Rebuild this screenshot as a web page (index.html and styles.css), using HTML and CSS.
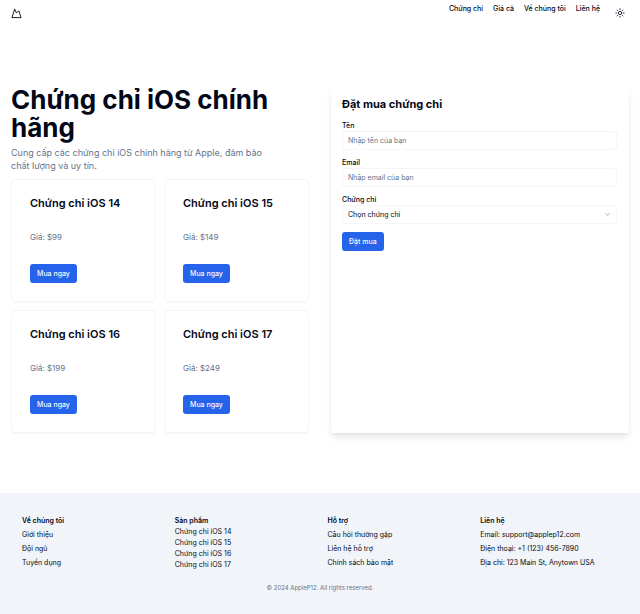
FILE: index.html
```html
<!DOCTYPE html>
<html lang="vi">
<head>
<meta charset="utf-8">
<meta name="viewport" content="width=device-width, initial-scale=1">
<title>AppleP12</title>
<link rel="stylesheet" href="styles.css">
</head>
<body>
<header class="site-header">
  <a class="logo" href="#" aria-label="AppleP12">
    <svg viewBox="0 0 24 24" aria-hidden="true"><path d="m8 3 4 8 5-5 5 15H2L8 3z"/></svg>
  </a>
  <nav class="nav">
    <a href="#">Chứng chỉ</a>
    <a href="#">Giá cả</a>
    <a href="#">Về chúng tôi</a>
    <a href="#">Liên hệ</a>
  </nav>
  <button class="theme" type="button" aria-label="Giao diện">
    <svg viewBox="0 0 24 24" aria-hidden="true"><circle cx="12" cy="12" r="4"/><path d="M12 2v2M12 20v2M4.9 4.9l1.4 1.4M17.7 17.7l1.4 1.4M2 12h2M20 12h2M6.3 17.7l-1.4 1.4M19.1 4.9l-1.4 1.4"/></svg>
  </button>
</header>
<main class="hero">
  <section class="intro">
    <h1>Chứng chỉ iOS chính hãng</h1>
    <p class="lead">Cung cấp các chứng chỉ iOS chính hãng từ Apple, đảm bảo chất lượng và uy tín.</p>
    <div class="products">
      <article class="card"><h2>Chứng chỉ iOS 14</h2><p>Giá: $99</p><button class="btn" type="button">Mua ngay</button></article>
      <article class="card"><h2>Chứng chỉ iOS 15</h2><p>Giá: $149</p><button class="btn" type="button">Mua ngay</button></article>
      <article class="card"><h2>Chứng chỉ iOS 16</h2><p>Giá: $199</p><button class="btn" type="button">Mua ngay</button></article>
      <article class="card"><h2>Chứng chỉ iOS 17</h2><p>Giá: $249</p><button class="btn" type="button">Mua ngay</button></article>
    </div>
  </section>
  <form class="order">
    <h2>Đặt mua chứng chỉ</h2>
    <div class="field">
      <label for="name">Tên</label>
      <input id="name" type="text" placeholder="Nhập tên của bạn">
    </div>
    <div class="field">
      <label for="email">Email</label>
      <input id="email" type="email" placeholder="Nhập email của bạn">
    </div>
    <div class="field">
      <label for="cert">Chứng chỉ</label>
      <div class="select">
        <select id="cert"><option>Chọn chứng chỉ</option><option>iOS 14</option><option>iOS 15</option><option>iOS 16</option><option>iOS 17</option></select>
        <svg viewBox="0 0 24 24" aria-hidden="true"><path d="m6 9 6 6 6-6"/></svg>
      </div>
    </div>
    <button class="btn" type="button">Đặt mua</button>
  </form>
</main>
<footer class="footer">
  <div class="columns">
    <div class="column">
      <h3>Về chúng tôi</h3>
      <a href="#">Giới thiệu</a>
      <a href="#">Đội ngũ</a>
      <a href="#">Tuyển dụng</a>
    </div>
    <div class="column compact">
      <h3>Sản phẩm</h3>
      <a href="#">Chứng chỉ iOS 14</a>
      <a href="#">Chứng chỉ iOS 15</a>
      <a href="#">Chứng chỉ iOS 16</a>
      <a href="#">Chứng chỉ iOS 17</a>
    </div>
    <div class="column">
      <h3>Hỗ trợ</h3>
      <a href="#">Câu hỏi thường gặp</a>
      <a href="#">Liên hệ hỗ trợ</a>
      <a href="#">Chính sách bảo mật</a>
    </div>
    <div class="column">
      <h3>Liên hệ</h3>
      <p>Email: support@applep12.com</p>
      <p>Điện thoại: +1 (123) 456-7890</p>
      <p>Địa chỉ: 123 Main St, Anytown USA</p>
    </div>
  </div>
  <p class="copyright">© 2024 AppleP12. All rights reserved.</p>
</footer>
</body>
</html>
```
FILE: styles.css
```css
* { box-sizing: border-box; margin: 0; }
body {
  min-height: 100vh;
  display: flex;
  flex-direction: column;
  font: 7px/10px Inter, "Liberation Sans", sans-serif;
  color: #020817;
  background: #fff;
}
a { color: inherit; text-decoration: none; }
button, input, select { font: inherit; color: inherit; }
svg { display: block; fill: none; stroke: currentColor; stroke-width: 2; stroke-linecap: round; stroke-linejoin: round; }

.site-header { display: flex; align-items: center; height: 26px; padding: 0 11px; }
.logo svg { width: 11px; height: 11px; }
.nav { display: flex; gap: 10px; margin-left: auto; align-self: flex-start; padding-top: 4px; font-weight: 500; }
.theme { margin-left: 11px; padding: 4px; border: 0; background: none; }
.theme svg { width: 10px; height: 10px; }

.hero { display: grid; grid-template-columns: 1fr 1fr; gap: 22px; padding: 60px 11px; }
h1 { font-size: 26px; line-height: 28px; font-weight: 700; }
.lead { max-width: 270px; margin-top: 4px; font-size: 9px; line-height: 13px; color: #64748b; }
.products { display: grid; grid-template-columns: 1fr 1fr; gap: 8px; margin-top: 7px; }
.card {
  display: flex;
  flex-direction: column;
  align-items: flex-start;
  padding: 15px 18px 18px;
  border: 1px solid #f4f5f7;
  border-radius: 4px;
  box-shadow: 0 1px 1px rgba(0, 0, 0, .03);
}
.card h2, .order h2 { font-size: 11px; line-height: 16px; font-weight: 600; }
.card p { margin: 20px 0 21px; font-size: 8px; line-height: 12px; color: #64748b; }
.btn {
  height: 19px;
  padding: 0 7px;
  border: 0;
  border-radius: 3px;
  background: #2563eb;
  color: #f8fafc;
  font-weight: 500;
}

.order {
  padding: 10px 12px 10px 11px;
  border-radius: 4px;
  box-shadow: 0 5px 7px -1px rgba(0, 0, 0, .1), 0 2px 3px -2px rgba(0, 0, 0, .1);
}
.order h2 { margin-bottom: 9px; font-weight: 700; }
.field { margin-bottom: 8px; }
.field label { display: block; font-weight: 500; }
.field input, .field select {
  display: block;
  width: 100%;
  height: 19px;
  padding: 0 5px;
  border: 1px solid #f4f5f7;
  border-radius: 3px;
  background: #fff;
  appearance: none;
}
.field input::placeholder { color: #64748b; opacity: 1; }
.select { position: relative; }
.select svg { position: absolute; right: 6px; top: 6px; width: 7px; height: 7px; opacity: .6; pointer-events: none; }

.footer { flex: 1; padding: 23px 22px; background: #f1f5f9; }
.columns { display: grid; grid-template-columns: repeat(4, 1fr); gap: 15px; }
.column { display: flex; flex-direction: column; gap: 4px; white-space: nowrap; }
.column h3 { font-size: 7px; line-height: 10px; font-weight: 600; }
.compact { gap: 1px; }
.copyright { margin-top: 13px; text-align: center; font-size: 6px; color: #64748b; }
```
